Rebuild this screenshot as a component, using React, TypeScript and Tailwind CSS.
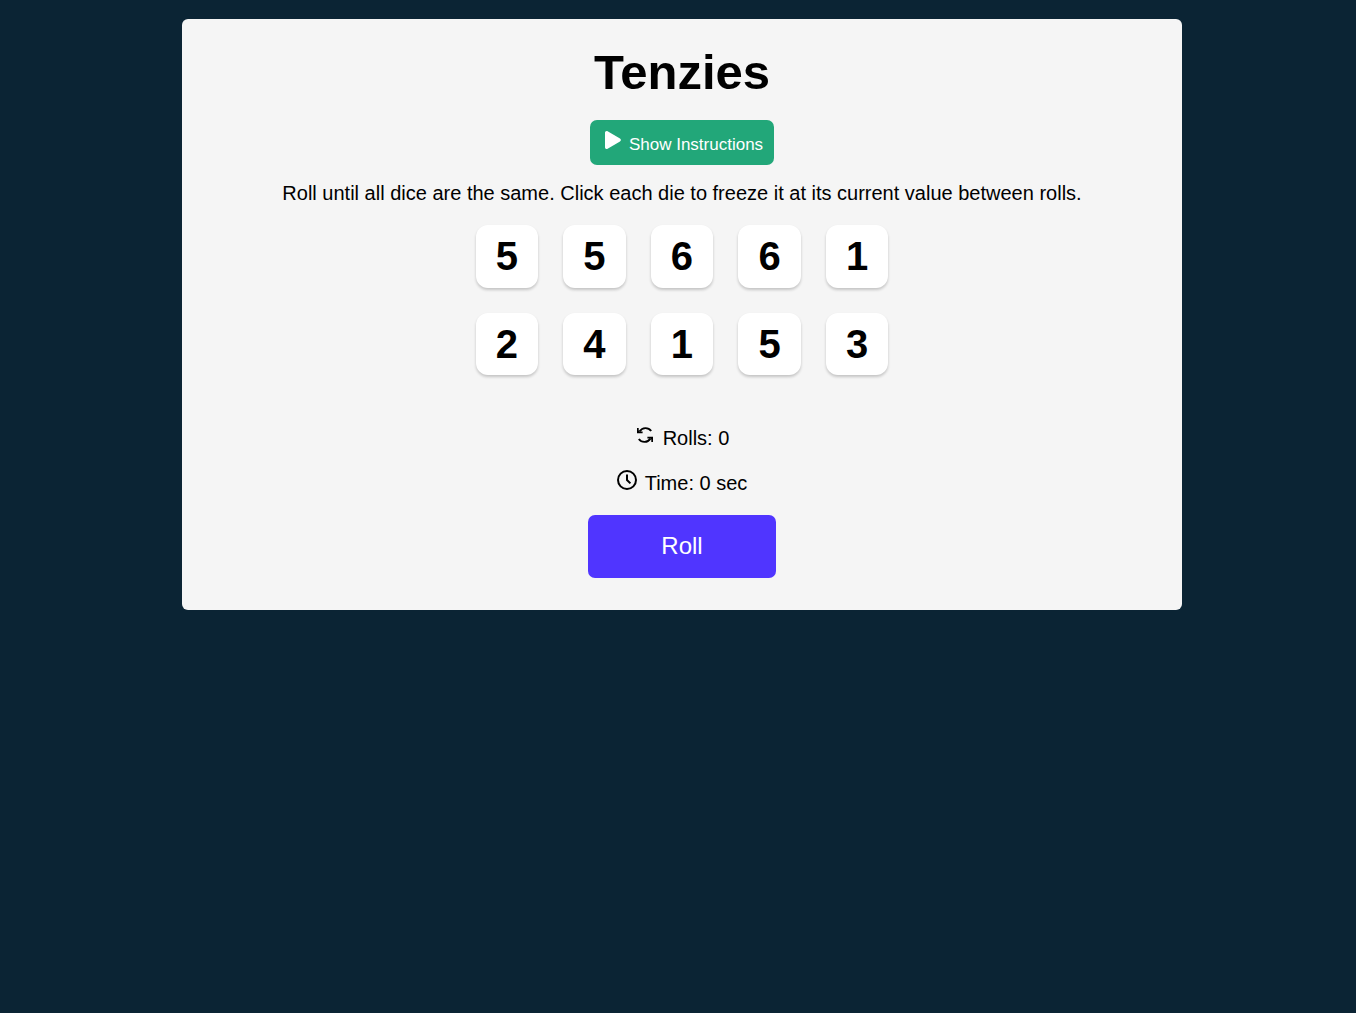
const dice = [5, 5, 6, 6, 1, 2, 4, 1, 5, 3];

function PlayIcon() {
  return (
    <svg aria-hidden="true" viewBox="0 0 22 22" fill="currentColor" className="mr-1.5 mb-1.5 size-[22px]">
      <path d="M4 3.8C4 2.4 5.4 1.6 6.6 2.3L19 9.6C20.2 10.3 20.2 11.7 19 12.4L6.6 19.7C5.4 20.4 4 19.6 4 18.2Z" />
    </svg>
  );
}

function RefreshIcon() {
  return (
    <svg aria-hidden="true" viewBox="0 0 20 20" fill="none" className="mr-2 mb-1.5 size-5">
      <path d="M4.6 6.4C7.4 2.2 13.2 2 16.2 6M15.4 13.6C12.6 17.8 6.8 18 3.8 14" stroke="currentColor" strokeWidth="1.9" />
      <path d="M2 3H3.7V6.6H7.6V8.3H2ZM3 4.8L6.4 8.3H3ZM18 17H16.3V13.4H12.4V11.7H18ZM17 15.2L13.6 11.7H17Z" fill="currentColor" />
    </svg>
  );
}

function ClockIcon() {
  return (
    <svg aria-hidden="true" viewBox="0 0 20 20" fill="none" stroke="currentColor" strokeWidth="2" className="mr-2 mb-1.5 size-5">
      <circle cx="10" cy="10" r="9" />
      <path d="M10 4.5V10L13.4 13.4" />
    </svg>
  );
}

export default function App() {
  return (
    <div className="min-h-screen bg-[#0b2434] pt-[19px] pl-2 font-['Liberation_Sans',Arial,sans-serif] text-black">
      <main className="mx-auto flex max-w-[1000px] flex-col items-center rounded-md bg-[#f5f5f5] px-4 pt-6 pb-8">
        <h1 className="text-[49px] leading-[58px] font-bold">Tenzies</h1>
        <button className="mt-[19px] flex h-[45px] cursor-pointer items-center rounded-[7px] bg-[#22a779] px-[11px] text-[17px] leading-5 text-white">
          <PlayIcon />
          <span className="pt-1">Show Instructions</span>
        </button>
        <p className="mt-4 text-center text-[20px] leading-6">
          Roll until all dice are the same. Click each die to freeze it at its current value between rolls.
        </p>
        <div className="mt-5 grid w-full max-w-[413px] grid-cols-5 gap-[25px]">
          {dice.map((value, i) => (
            <button
              key={i}
              className="aspect-square cursor-pointer rounded-xl bg-white text-[40px] leading-none font-bold shadow-[0_2px_3px_rgba(0,0,0,0.2)]"
            >
              {value}
            </button>
          ))}
        </div>
        <p className="mt-[50px] flex items-center text-[20px] leading-6">
          <RefreshIcon />
          Rolls: 0
        </p>
        <p className="mt-[19px] flex items-center text-[20px] leading-6">
          <ClockIcon />
          Time: 0 sec
        </p>
        <button className="mt-[19px] h-[63px] w-[188px] cursor-pointer rounded-[7px] bg-[#5035ff] pb-0.5 text-[24px] text-white">
          Roll
        </button>
      </main>
    </div>
  );
}
